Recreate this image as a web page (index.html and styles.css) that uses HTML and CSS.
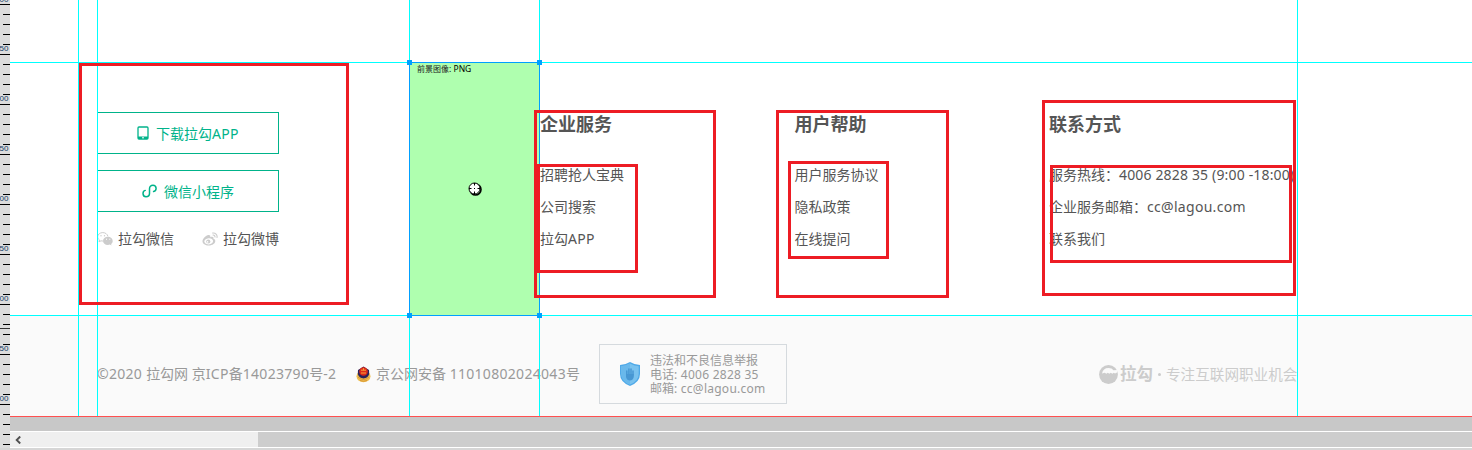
FILE: index.html
```html
<!DOCTYPE html>
<html lang="zh-CN">
<head>
<meta charset="utf-8">
<title>拉勾网</title>
<link rel="stylesheet" href="styles.css">
</head>
<body>
<div class="editor">
  <aside class="ruler">
    <span class="mark first">800</span><span class="mark">850</span><span class="mark">900</span><span class="mark">950</span><span class="mark">000</span><span class="mark">050</span><span class="mark">800</span><span class="mark">850</span><span class="mark">900</span>
    <i class="ruler-cursor"></i>
  </aside>
  <main class="canvas">
    <section class="links">
      <div class="apps">
        <a class="btn"><svg class="phone" width="12" height="14" viewBox="0 0 12 14"><rect x="1" y="1" width="10" height="12" rx="1" fill="none" stroke="#00b38a" stroke-width="1.3"/><path d="M1 10.5h10V13H1z" fill="#00b38a"/><path d="M5 11.8h2" stroke="#fff" stroke-width="1"/></svg><span>下载拉勾<b class="lat">APP</b></span></a>
        <a class="btn mini"><svg width="15" height="14" viewBox="0 0 15 14"><path d="M3.2 6.4C.2 7.2.2 12.7 4 12.7c2.200 0 3.500-1.300 3.500-3.200V4.700C7.500 2.600 8.800 1.200 11 1.200c3.800 0 4.200 5.600.6 6.300" fill="none" stroke="#00b38a" stroke-width="1.500" stroke-linecap="round"/></svg><span>微信小程序</span></a>
        <div class="social">
          <a><svg width="16" height="14" viewBox="0 0 16 14"><path d="M5.8.6C2.9.6.7 2.4.7 4.8c0 1.3.7 2.5 1.8 3.2L2 9.8l2-1q1 .3 2.2.2M10.9 4.3C10.4 2.1 8.3.6 5.8.6" fill="none" stroke="#ccc"/><circle cx="4" cy="3.7" r=".7" fill="#ccc"/><circle cx="7.5" cy="3.7" r=".7" fill="#ccc"/><path d="M10.9 4.8c-2.8 0-4.9 1.8-4.9 4.1s2.1 4 4.9 4c.7 0 1.3-.1 1.9-.3l1.7.9-.4-1.6c1-.7 1.6-1.8 1.6-3 0-2.3-2.1-4.1-4.8-4.1z" fill="#ccc"/><path d="M9 7.3h1M12.3 7.3h1" stroke="#fff" stroke-width="1.1"/></svg>拉勾微信</a>
          <a><svg width="16" height="14" viewBox="0 0 16 14"><path fill-rule="evenodd" d="M6.3 3C4 3.4.5 6.6.5 9.3c0 2.5 2.8 4.2 6.2 4.2 4 0 6.6-2.3 6.6-4.5 0-1.2-.8-1.9-1.9-2.2.6-1.8-.8-2.5-3.2-1.6C8.8 3.700 7.800 2.800 6.300 3zM6.500 6.200c2.500-.2 4.500 1 4.600 2.700.1 1.800-1.900 3.300-4.300 3.500S2.400 11.200 2.300 9.600 4 6.400 6.500 6.200z" fill="#ccc"/><circle cx="6.300" cy="9.500" r="2.100" fill="#ccc"/><circle cx="5.600" cy="9.900" r=".8" fill="#fff"/><path d="M10.300 1.100c3-.7 5.500 1.800 4.600 4.800M10.700 3.100c1.500-.3 2.600.9 2.200 2.300" fill="none" stroke="#ccc" stroke-width="1.100"/></svg>拉勾微博</a>
        </div>
      </div>
      <div class="col"><h3>企业服务</h3><ul><li>招聘抢人宝典</li><li>公司搜索</li><li>拉勾<span class="lat">APP</span></li></ul></div>
      <div class="col"><h3>用户帮助</h3><ul><li>用户服务协议</li><li>隐私政策</li><li>在线提问</li></ul></div>
      <div class="col contact"><h3>联系方式</h3><ul><li>服务热线：<span class="lat phone-no">4006 2828 35 (9:00 -18:00)</span></li><li>企业服务邮箱：<span class="lat">cc@lagou.com</span></li><li>联系我们</li></ul></div>
    </section>
    <footer class="legal">
      <div class="copyright"><span class="lat">©2020 </span>拉勾网 京<span class="lat">ICP</span>备<span class="lat">14023790</span>号<span class="lat">-2</span></div>
      <div class="police"><svg width="15" height="17" viewBox="0 0 15 17"><ellipse cx="7.500" cy="10.300" rx="7" ry="6" fill="#edbd52"/><path d="M2 4Q5 2 7.500.5 10 2 13 4L13.200 8Q12 12 7.500 12.500 3 12 1.800 8z" fill="#28215c"/><circle cx="7.500" cy="5.500" r="4.300" fill="#dd2a18"/><path d="M7.500 2.200v2M5 4.200h5M5 7h5" stroke="#f8a13b" stroke-width="1"/><path d="M2 11q5.500 5 11 0M4 14.500q3.500 1.500 7 0" fill="none" stroke="#d99632"/></svg><span>京公网安备 <span class="lat">11010802024043</span>号</span></div>
      <div class="report"><svg width="20" height="24" viewBox="0 0 20 24"><path d="M10 0Q15 3 20 3V12Q20 20 10 24 0 20 0 12V3Q5 3 10 0z" fill="#4fa9e8"/><path d="M10 1.500Q14.500 4 18.700 4.200V12Q18.700 19 10 22.500 1.300 19 1.300 12V4.200Q5.500 4 10 1.500z" fill="#79c2ef"/><path d="M10 1.500v21Q1.300 19 1.300 12V4.200Q5.500 4 10 1.500z" fill="#69b8eb"/><path d="M6.800 9v4M8.900 7v6M11 7v6M13 9v4" stroke="#4797d3" stroke-width="1.500" stroke-linecap="round"/><path d="M6 12h7.800V15q-1 3.500-3.900 3.500T6 15z" fill="#4797d3"/></svg><p>违法和不良信息举报<br>电话<span class="lat">: 4006 2828 35</span><br>邮箱<span class="lat">: cc@lagou.com</span></p></div>
      <div class="brand"><svg width="19" height="19" viewBox="0 0 19 19"><circle cx="9.500" cy="9.500" r="9.400" fill="#ccc"/><path d="M3 8.500Q4 3 9.500 3q3.500 0 5 2.300L18.500 5v2.200L16 8.500l-1.200-.7-1.500.9-1.500-.9-1.500.9-1.500-.9-1.500.9-1.500-.9z" fill="#fafafa"/></svg><strong>拉勾</strong><i class="dot"></i><span>专注互联网职业机会</span></div>
    </footer>
    <div class="offcanvas"></div>
    <div class="scrollbar"><div class="track"><svg width="8" height="8" viewBox="0 0 8 8"><path d="M6.200.5L2.700 4l3.500 3.500" fill="none" stroke="#505050" stroke-width="1.900"/></svg></div><div class="thumb"></div></div>

    <i class="guide v g1"></i><i class="guide v g2"></i><i class="guide v g3"></i><i class="guide v g4"></i><i class="guide v g5"></i>
    <i class="guide h g6"></i><i class="guide h g7"></i>
    <div class="slice"><span class="slice-name">前景图像<b>: PNG</b></span><i class="handle tl"></i><i class="handle tr"></i><i class="handle bl"></i><i class="handle br"></i>
      <svg class="target" width="14" height="14" viewBox="0 0 14 14"><circle cx="7.500" cy="7.500" r="5.500" fill="none" stroke="#000" stroke-width="1.600"/><circle cx="6.500" cy="6.500" r="5.500" fill="#fff" stroke="#000"/><path d="M6.500 1v2.500M6.500 9.500V12M1 6.500h2.500M9.500 6.500H12M6 6.500h1" stroke="#000"/></svg>
    </div>
    <i class="note n1"></i><i class="note n2"></i><i class="note n3"></i><i class="note n4"></i><i class="note n5"></i><i class="note n6"></i><i class="note n7"></i>
  </main>
</div>
</body>
</html>
```
FILE: styles.css
```css
* { box-sizing: border-box; }
body { margin: 0; font: 14px/20px "Noto Sans", "Noto Sans CJK SC", sans-serif; color: #555; background: #d6d6d6; overflow: hidden; }
h3, p, ul { margin: 0; padding: 0; }
ul { list-style: none; }
svg { flex: none; display: block; }
.lat { font-family: "Noto Sans", sans-serif; font-weight: 400; letter-spacing: .3px; }

.editor { display: grid; grid-template-columns: 10px 1462px; width: 1472px; height: 448px; }
.ruler { position: relative; overflow: hidden; display: flex; flex-direction: column; background:
  repeating-linear-gradient(to bottom, transparent 0 4px, #000 4px 5px, transparent 5px 50px) 0 0 / 10px 448px,
  repeating-linear-gradient(to bottom, transparent 0 4px, #000 4px 5px, transparent 5px 10px) 3px 0 / 7px 448px no-repeat, #dcdcdc; }
.mark { flex: none; height: 50px; padding-top: 41px; margin-left: -5px; font: 8px/8px "Liberation Sans", sans-serif; color: #143c66; }
.mark.first { height: 4px; padding: 0; line-height: 0; }
.ruler-cursor { position: absolute; left: 0; top: 328px; width: 10px; height: 1px; background: #333; }

.canvas { position: relative; overflow: hidden; display: flex; flex-direction: column; background: #fff; }
.links { height: 316px; padding: 112px 0 0 87px; display: grid; grid-template-columns: 443px 254.4px 254.6px 280px; }
.apps { width: 182px; display: flex; flex-direction: column; gap: 16px; }
.btn { height: 42px; border: 1px solid #00b38a; color: #00b38a; display: flex; align-items: center; justify-content: center; gap: 7px; }
.btn span { padding-top: 1px; }
.social { display: flex; justify-content: space-between; margin-top: 1px; }
.social a { display: flex; align-items: center; gap: 5px; line-height: 20px; }
.col { white-space: nowrap; }
.col h3 { font-size: 18px; line-height: 24px; font-weight: 700; }
.col ul { margin-top: 23px; }
.col li { line-height: 32px; }
.phone-no { letter-spacing: .16px; }

.legal { height: 100px; padding: 16px 0 0 87px; background: #fafafa; color: #999; display: flex; align-items: center; white-space: nowrap; }
.copyright { width: 259px; }
.police { width: 243px; display: flex; align-items: center; gap: 5px; }
.report { width: 188px; height: 60px; border: 1px solid #d5dade; display: flex; align-items: center; padding-left: 20px; gap: 10px; }
.report p { font-size: 12px; line-height: 14px; padding-top: 2px; }
.report .lat { letter-spacing: .25px; }
.brand { margin-left: 312px; display: flex; align-items: center; color: #ccc; font-size: 14.6px; }
.brand strong { font-size: 16.5px; margin-left: 2px; font-weight: 700; }
.dot { width: 3px; height: 3px; border-radius: 50%; background: #ccc; margin: 0 5px 0 5px; }

.offcanvas { height: 15px; background: #c8c8c8; border-top: 1px solid #ff5050; }
.scrollbar { height: 17px; display: flex; border: solid #fff; border-width: 1px 0; }
.track { width: 248px; background: #efefef; padding: 4px; }
.thumb { flex: 1; background: #cdcdcd; }

.guide { position: absolute; background: #0ff; }
.v { top: 0; width: 1px; height: 416px; }
.h { left: 0; width: 100%; height: 1px; }
.g1 { left: 68px; } .g2 { left: 87px; } .g3 { left: 399px; } .g4 { left: 529px; } .g5 { left: 1287px; }
.g6 { top: 62px; } .g7 { top: 315px; }
.slice { position: absolute; left: 399px; top: 62px; width: 131px; height: 254px; border: 1px solid #00a0ff; background: #afffaf; padding: 1px 7px; }
.slice-name { display: block; font: 8px/10px "Noto Sans CJK SC", sans-serif; color: #222; white-space: nowrap; }
.slice-name b { font: 8.5px/10px "Noto Sans", sans-serif; color: #000; }
.handle { position: absolute; width: 5px; height: 5px; background: #00a0ff; }
.tl { left: -3px; top: -3px; } .tr { right: -3px; top: -3px; } .bl { left: -3px; bottom: -3px; } .br { right: -3px; bottom: -3px; }
.target { position: absolute; left: 58px; top: 119px; }
.note { position: absolute; border: 3px solid #ed1c24; }
.n1 { left: 69px; top: 63px; width: 270px; height: 242px; }
.n2 { left: 524px; top: 110px; width: 182px; height: 188px; }
.n3 { left: 527px; top: 164px; width: 101px; height: 109px; }
.n4 { left: 766px; top: 110px; width: 173px; height: 188px; }
.n5 { left: 778px; top: 161px; width: 101px; height: 98px; }
.n6 { left: 1032px; top: 100px; width: 254px; height: 196px; }
.n7 { left: 1040px; top: 165px; width: 242px; height: 98px; }
```
